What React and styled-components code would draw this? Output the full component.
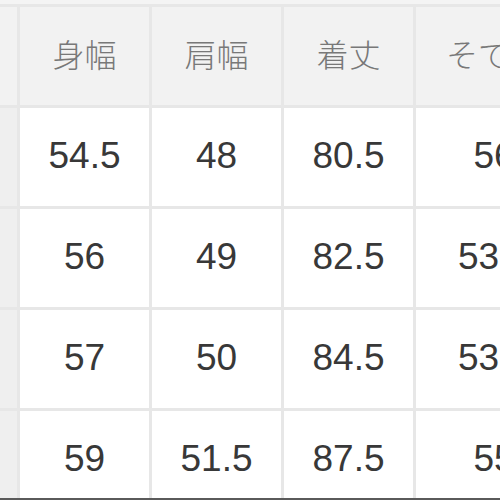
import React from 'react'
import styled, { createGlobalStyle } from 'styled-components'

const GlobalStyle = createGlobalStyle`
  html, body {
    margin: 0;
    padding: 0;
    background: #f4f4f4;
    overflow: hidden;
  }
`

const Page = styled.div`
  width: 500px;
  height: 500px;
  display: flex;
  flex-direction: column;
  overflow: hidden;
`

const Viewport = styled.div`
  flex: 1;
  overflow: hidden;
  padding-top: 4px;
`

const Table = styled.div`
  display: grid;
  grid-template-columns: 17px repeat(3, 129px) 156px;
  grid-auto-rows: 98px;
  gap: 3px;
  padding-top: 3px;
  background: #e7e7e7;
  width: max-content;
`

const Cell = styled.div`
  display: flex;
  align-items: center;
  justify-content: center;
  white-space: nowrap;
  overflow: hidden;
  background: ${p => (p.$head ? '#f2f2f2' : p.$side ? '#efefef' : '#ffffff')};
  color: ${p => (p.$head ? '#787878' : '#383838')};
  font-family: ${p =>
    p.$head
      ? '"Noto Sans CJK JP", "Noto Sans", sans-serif'
      : '"Liberation Sans", Arial, sans-serif'};
  font-size: ${p => (p.$head ? '32px' : '37px')};
  font-weight: ${p => (p.$head ? 300 : 400)};
  padding-bottom: ${p => (p.$head ? '6px' : '2px')};
  box-sizing: border-box;
`

const BottomEdge = styled.div`
  height: 2px;
  background: #5a5a5a;
`

const headers = ['身幅', '肩幅', '着丈', 'そで丈']
const rows = [
  ['54.5', '48', '80.5', '56'],
  ['56', '49', '82.5', '53.5'],
  ['57', '50', '84.5', '53.5'],
  ['59', '51.5', '87.5', '55'],
]

export default function App() {
  return (
    <Page>
      <GlobalStyle />
      <Viewport>
        <Table>
          <Cell $side $head />
          {headers.map(h => (
            <Cell key={h} $head>{h}</Cell>
          ))}
          {rows.map((r, i) => (
            <React.Fragment key={i}>
              <Cell $side />
              {r.map((v, j) => (
                <Cell key={j}>{v}</Cell>
              ))}
            </React.Fragment>
          ))}
        </Table>
      </Viewport>
      <BottomEdge />
    </Page>
  )
}
